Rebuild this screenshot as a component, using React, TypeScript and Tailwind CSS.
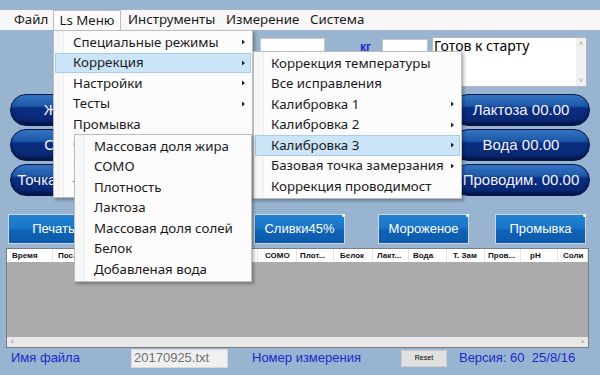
import React from "react";
import clsx from "clsx";

const Arrow = () => (
  <svg width="3" height="5" viewBox="0 0 3 5" className="absolute right-[6px] top-1/2 -translate-y-1/2">
    <path d="M0 0L3 2.5L0 5Z" fill="#222" />
  </svg>
);

type Item = { label: string; sub?: boolean; active?: boolean };

function Menu({ items, className, pad }: { items: Item[]; className: string; pad: string }) {
  return (
    <div
      className={clsx(
        "absolute z-10 bg-[#fcfcfc] border border-[#bdbdbd] shadow-[2px_2px_3px_rgba(0,0,0,0.3)] py-[1px] px-[1px] font-['Noto_Sans',sans-serif] text-[13.3px] text-[#1a1a1a]",
        className
      )}
    >
      <div className="absolute left-0 top-0 bottom-0 w-[10px] bg-[#f7f7f7] border-r border-[#ededed]" />
      {items.map((it) => (
        <div
          key={it.label}
          className={clsx(
            "relative h-[20.5px] flex items-center leading-none",
            pad,
            it.active && "bg-[#cce4f7] outline outline-1 -outline-offset-1 outline-[#a6cdef]"
          )}
        >
          <span className="relative">{it.label}</span>
          {it.sub && <Arrow />}
        </div>
      ))}
    </div>
  );
}

function Pill({ label, className }: { label: string; className?: string }) {
  return (
    <div
      className={clsx(
        "h-[32px] w-[138px] rounded-full border-[1.5px] border-[#06174a] bg-[linear-gradient(to_bottom,#3574c4_0%,#1d58a8_36%,#0b2d80_44%,#0a2a78_78%,#051c5e_100%)] shadow-[inset_0_-2px_3px_rgba(0,0,0,0.35)] flex items-center justify-center text-[15px] text-[#f2f4ff] whitespace-nowrap",
        className
      )}
    >
      {label}
    </div>
  );
}

function BlueButton({ label, className }: { label: string; className?: string }) {
  return (
    <div
      className={clsx(
        "relative h-[30px] w-[91px] border border-[#cfd6de] bg-[linear-gradient(to_bottom,#2081d2_0%,#1a76c8_45%,#1062b6_55%,#0c5aab_100%)] flex items-center justify-center text-[13px] text-white",
        className
      )}
    >
      {label}
      <span className="absolute -top-[1px] -right-[1px] w-[3px] h-[3px] rounded-full bg-white" />
    </div>
  );
}

const cols: [string, number, number][] = [
  ["Время", 46, 5],
  ["Пос...", 41, 5],
  ["Ном...", 41, 5],
  ["Жир", 41, 5],
  ["Тем...", 41, 5],
  ["Мас...", 41, 5],
  ["СОМО", 39, 7],
  ["Плот...", 37, 3],
  ["Белок", 39, 6],
  ["Лакт...", 36, 4],
  ["Вода", 38, 4],
  ["Т. Зам", 38, 6],
  ["Пров...", 36, 3],
  ["pH", 37, 9],
  ["Соли", 30, 5],
];

export default function App() {
  return (
    <div className="relative w-[600px] h-[375px] overflow-hidden bg-[#99b4d1] font-['Liberation_Sans',Arial,sans-serif]">
      <div className="h-[10px]" />
      {/* menu bar */}
      <div className="h-[20px] bg-[#f7f7f7] flex items-stretch font-['Noto_Sans',sans-serif] text-[13.3px] text-[#1a1a1a]">
        <div className="w-[53px] pl-[14px] flex items-center">Файл</div>
        <div className="w-[68px] flex items-center justify-center bg-[#fcfcfc] border border-b-0 border-[#bdbdbd]">Ls Меню</div>
        <div className="w-[98px] pl-[7px] flex items-center">Инструменты</div>
        <div className="w-[84px] pl-[7px] flex items-center">Измерение</div>
        <div className="pl-[7px] flex items-center">Система</div>
      </div>

      {/* row 1 */}
      <div className="flex h-[50px] mt-[7px]">
        <div className="w-[260px]" />
        <div className="w-[65px] h-[14px] mt-[1px] bg-white border border-[#c8c8c8]" />
        <span className="ml-[35px] mt-[1px] text-[12px] font-bold text-[#1c28c8]">кг</span>
        <div className="ml-[11px] w-[46px] h-[14px] mt-[2px] bg-white border border-[#c8c8c8]" />
        <div className="ml-[4px] w-[155px] h-[50px] bg-white border border-[#b8b8b8] flex">
          <div className="flex-1 text-[14px] leading-[16px] text-black pl-[1px] font-['Noto_Sans',sans-serif]">Готов к старту</div>
          <div className="w-[10px] bg-[#f0f0f0] flex flex-col justify-between items-center text-[7px] text-[#9a9a9a] leading-none py-[2px]">
            <span>˄</span>
            <span>˅</span>
          </div>
        </div>
      </div>

      {/* pills */}
      <div className="flex justify-between px-[10px] mt-[7px]">
        <div className="flex flex-col gap-[3px]">
          <Pill label="Жир  00.00" className="pl-[6px] whitespace-pre" />
          <Pill label="Сомо 00.00" className="pl-[10px]" />
          <Pill label="Точка замер. 00.00" className="pl-[8px]" />
        </div>
        <div className="flex flex-col gap-[3px]">
          <Pill label="Лактоза 00.00" />
          <Pill label="Вода 00.00" />
          <Pill label="Проводим. 00.00" />
        </div>
      </div>

      {/* blue buttons */}
      <div className="flex mt-[18px] pl-[8px]">
        <BlueButton label="Печать" />
        <BlueButton label="Плотность" className="ml-[32px]" />
        <BlueButton label="Сливки45%" className="ml-[32px]" />
        <BlueButton label="Мороженое" className="ml-[33px]" />
        <BlueButton label="Промывка" className="ml-[26px]" />
      </div>

      {/* table */}
      <div className="ml-[6px] mt-[4px] w-[583px] h-[100px] border border-[#7d7d7d] bg-[#ababab] flex flex-col">
        <div className="h-[13px] bg-white flex">
          {cols.map(([t, w, p]) => (
            <div
              key={t}
              style={{ width: w }}
              className="h-full border-r border-[#e4e4e4] text-[8px] font-bold leading-[13px] text-[#111] whitespace-nowrap overflow-hidden"
            >
              <span style={{ paddingLeft: p }}>{t}</span>
            </div>
          ))}
        </div>
        <div className="flex-1" />
        <div className="h-[10px] bg-[#e8e8e8] flex justify-between items-center px-[4px] text-[8px] leading-none text-[#777]">
          <span>‹</span>
          <span>›</span>
        </div>
      </div>

      {/* bottom */}
      <div className="flex items-center h-[20px] text-[13px] text-[#1c28c8]">
        <span className="ml-[11px] w-[120px]">Имя файла</span>
        <div className="w-[97px] h-[19px] bg-[#f0f0f0] border border-[#d8d8d8] text-[#707070] flex items-center pl-[2px]">20170925.txt</div>
        <span className="ml-[24px]">Номер измерения</span>
        <div className="ml-[40px] w-[46px] h-[17px] bg-[#e1e1e1] border border-[#cfcfcf] text-[7px] text-black flex items-center justify-center">Reset</div>
        <span className="ml-[12px]">Версия: 60&nbsp;&nbsp;25/8/16</span>
      </div>

      {/* open menus */}
      <Menu
        className="left-[53px] top-[30px] w-[200px]"
        pad="pl-[18px]"
        items={[
          { label: "Специальные режимы", sub: true },
          { label: "Коррекция", sub: true, active: true },
          { label: "Настройки", sub: true },
          { label: "Тесты", sub: true },
          { label: "Промывка" },
          { label: "Сервис" },
          { label: "Режим" },
          { label: "Таймер" },
        ]}
      />
      <Menu
        className="left-[253px] top-[51px] w-[209px]"
        pad="pl-[16px]"
        items={[
          { label: "Коррекция температуры" },
          { label: "Все исправления" },
          { label: "Калибровка 1", sub: true },
          { label: "Калибровка 2", sub: true },
          { label: "Калибровка 3", sub: true, active: true },
          { label: "Базовая точка замерзания", sub: true },
          { label: "Коррекция проводимост" },
        ]}
      />
      <Menu
        className="left-[74px] top-[134px] w-[178px]"
        pad="pl-[18px]"
        items={[
          { label: "Массовая доля жира" },
          { label: "СОМО" },
          { label: "Плотность" },
          { label: "Лактоза" },
          { label: "Массовая доля солей" },
          { label: "Белок" },
          { label: "Добавленая вода" },
        ]}
      />
    </div>
  );
}
